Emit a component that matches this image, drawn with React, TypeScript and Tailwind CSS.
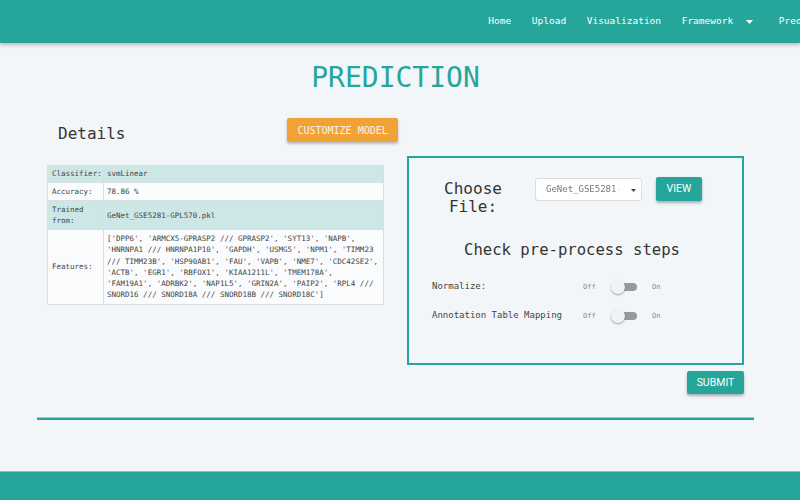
const mono = "font-['DejaVu_Sans_Mono',monospace]";

const navLinks = ['Home', 'Upload', 'Visualization'];

const featureLines = [
    "['DPP6', 'ARMCX5-GPRASP2 /// GPRASP2', 'SYT13', 'NAPB',",
    "'HNRNPA1 /// HNRNPA1P10', 'GAPDH', 'USMG5', 'NPM1', 'TIMM23",
    "/// TIMM23B', 'HSP90AB1', 'FAU', 'VAPB', 'NME7', 'CDC42SE2',",
    "'ACTB', 'EGR1', 'RBFOX1', 'KIAA1211L', 'TMEM178A',",
    "'FAM19A1', 'ADRBK2', 'NAP1L5', 'GRIN2A', 'PAIP2', 'RPL4 ///",
    "SNORD16 /// SNORD18A /// SNORD18B /// SNORD18C']",
];

function Toggle({ label }: { label: string }) {
    return (
        <div className="flex items-center h-[16px]">
            <span className="w-[151px] text-[9px] text-[#444]">{label}</span>
            <span className="w-[13px] text-[7px] text-[#8a8a8a]">Off</span>
            <span className="relative ml-[17px] w-[24px] h-[8px] rounded-full bg-[#999]">
                <span className="absolute -left-[2px] top-1/2 -translate-y-1/2 w-[14px] h-[14px] rounded-full bg-[#f2f2f2] shadow-[0_1px_2px_rgba(0,0,0,0.35)]" />
            </span>
            <span className="ml-[15px] text-[7px] text-[#8a8a8a]">On</span>
        </div>
    );
}

export default function App() {
    return (
        <div className={`h-[500px] overflow-hidden bg-[#f3f6f9] flex flex-col ${mono}`}>
            {/* navbar */}
            <nav className="h-[43px] shrink-0 bg-[#26a69a] shadow-[0_2px_4px_rgba(0,0,0,0.25)] flex items-center pl-[478px] whitespace-nowrap overflow-hidden text-[9.5px] text-white relative z-10">
                {navLinks.map((l) => (
                    <a key={l} className="px-[10.3px]">{l}</a>
                ))}
                <a className="px-[10.3px] flex items-center">
                    Framework
                    <svg className="ml-[13px] mr-[5px]" width="7" height="4" viewBox="0 0 7 4">
                        <path d="M0 0 L7 0 L3.5 4 Z" fill="white" />
                    </svg>
                </a>
                <a className="px-[10.3px]">Prediction</a>
            </nav>

            <div className="w-[717px] ml-[37px]">
                <h1 className="mt-[19px] text-center text-[28px] leading-[32px] text-[#26a69a]">PREDICTION</h1>

                <div className="mt-[24px] px-[10px] flex gap-[23px]">
                    {/* left: details */}
                    <div className="w-[337px]">
                        <div className="flex items-start">
                            <h2 className="ml-[11px] mt-[7px] text-[16px] leading-[18px] text-[#333]">Details</h2>
                            <button className="ml-[162px] h-[24px] px-[10px] bg-[#f0a236] text-[10px] text-[#fdf3e6] shadow-[0_2px_3px_rgba(0,0,0,0.25)] rounded-[2px] whitespace-nowrap">
                                CUSTOMIZE MODEL
                            </button>
                        </div>

                        <div className="mt-[22px] border border-[#d8dfe1] text-[7.5px] text-[#444]">
                            <div className="flex bg-[#cde7e6] border-b border-[#d8dfe1]">
                                <div className="w-[56px] shrink-0 px-[4px] py-[3px] leading-[10px] border-r border-[#d8dfe1]">Classifier:</div>
                                <div className="px-[3px] py-[3px] leading-[10px]">svmLinear</div>
                            </div>
                            <div className="flex bg-[#f9fbfc] border-b border-[#d8dfe1]">
                                <div className="w-[56px] shrink-0 px-[4px] py-[3.5px] leading-[10px] border-r border-[#d8dfe1]">Accuracy:</div>
                                <div className="px-[3px] py-[3.5px] leading-[10px]">78.86 %</div>
                            </div>
                            <div className="flex bg-[#cde7e6] border-b border-[#d8dfe1]">
                                <div className="w-[56px] shrink-0 px-[4px] py-[3px] leading-[11px] border-r border-[#d8dfe1]">Trained<br />from:</div>
                                <div className="px-[3px] flex items-center leading-[11px]">GeNet_GSE5281-GPL570.pkl</div>
                            </div>
                            <div className="flex bg-[#f9fbfc]">
                                <div className="w-[56px] shrink-0 px-[4px] border-r border-[#d8dfe1] flex items-center">Features:</div>
                                <div className="px-[3px] py-[3px] leading-[11.3px] whitespace-nowrap">
                                    {featureLines.map((line, i) => (
                                        <div key={i}>{line}</div>
                                    ))}
                                </div>
                            </div>
                        </div>
                    </div>

                    {/* right: upload box */}
                    <div className="w-[337px] mt-[38px]">
                        <div className="h-[209px] border-2 border-[#26a69a]">
                            <div className="flex items-start pt-[20px]">
                                <div className="ml-[35px] mt-[2px] w-[58px] text-center text-[16px] leading-[18px] text-[#333]">
                                    Choose<br />File:
                                </div>
                                <div className="relative ml-[33px] w-[107px] h-[23px] bg-white border border-[#dcdcdc] rounded-[3px] flex items-center pl-[10px] text-[9px] text-[#777]">
                                    <span className="whitespace-nowrap [mask-image:linear-gradient(to_right,black_88%,transparent)]">GeNet_GSE5281-</span>
                                    <svg className="absolute right-[5px] top-[10px]" width="5" height="3" viewBox="0 0 5 3">
                                        <path d="M0 0 L5 0 L2.5 3 Z" fill="#444" />
                                    </svg>
                                </div>
                                <button className="ml-[14px] -mt-[1px] w-[46px] h-[24px] bg-[#26a69a] text-white text-[10.5px] font-['Roboto',sans-serif] shadow-[0_2px_3px_rgba(0,0,0,0.3)] rounded-[2px]">
                                    VIEW
                                </button>
                            </div>

                            <h3 className="mt-[25px] pr-[7px] text-center text-[15.6px] leading-[18px] text-[#333]">Check pre-process steps</h3>

                            <div className="mt-[20px] pl-[23px] flex flex-col gap-[13px]">
                                <Toggle label="Normalize:" />
                                <Toggle label="Annotation Table Mapping" />
                            </div>
                        </div>
                        <div className="mt-[6px] flex justify-end">
                            <button className="w-[57px] h-[23px] bg-[#26a69a] text-white text-[10.5px] font-['Roboto',sans-serif] shadow-[0_2px_3px_rgba(0,0,0,0.3)] rounded-[2px]">
                                SUBMIT
                            </button>
                        </div>
                    </div>
                </div>

                <div className="mt-[23px] h-[3px] bg-[#26a69a] border-t border-[#8fd0ca]" />
            </div>

            <footer className="mt-[51px] h-[60px] shrink-0 bg-[#26a69a] border-t border-[#7fc9c2]" />
        </div>
    );
}
